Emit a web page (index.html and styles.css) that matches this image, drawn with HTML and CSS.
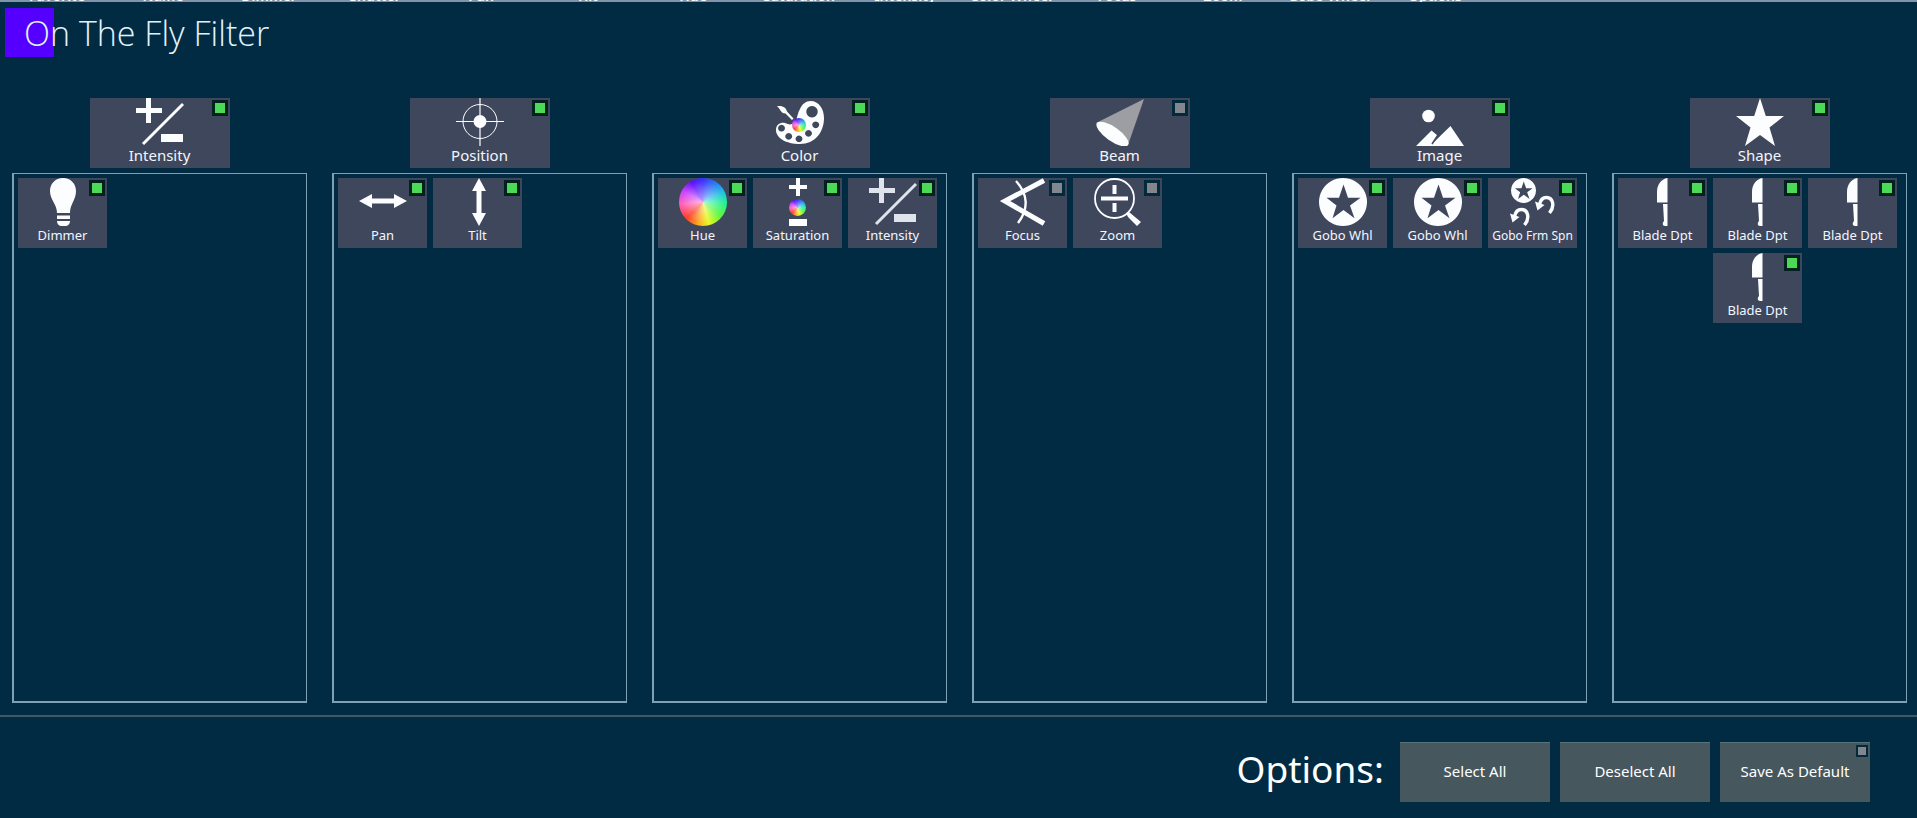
FILE: index.html
```html
<!DOCTYPE html>
<html lang="en">
<head>
<meta charset="utf-8">
<title>On The Fly Filter</title>
<link rel="stylesheet" href="styles.css">
</head>
<body>
<svg class="defs" aria-hidden="true">
  <symbol id="plus-minus" viewBox="0 0 48 48"><path d="M10 0h5v10h11v5H15v10h-5V15H0v-5h10zM25 36h22v8H25z"/><path d="M7 46 47 6" stroke="currentColor" stroke-width="3"/></symbol>
  <symbol id="bulb" viewBox="0 0 48 48"><path d="M24 0c8 0 13 6 13 13 0 9-6 13-6 22H18c0-9-7-13-7-22C11 6 16 0 24 0zM18 37.500h13v3.500H18zM18 43h13c0 3-2 5-5 5h-3c-3 0-5-2-5-5z"/></symbol>
  <symbol id="target" viewBox="0 0 48 48"><path d="M24 0v48M0 23.500h48" stroke="currentColor" stroke-width="1.200"/><circle cx="24" cy="23.500" r="17" fill="none" stroke="currentColor"/><circle cx="24" cy="23.500" r="6.500"/></symbol>
  <symbol id="arrows" viewBox="0 0 48 48"><path d="M0 23 13 16v4.500h22V16l13 7-13 7v-4.500H13V30z"/></symbol>
  <symbol id="palette" viewBox="0 0 48 48"><path fill-rule="evenodd" d="M34.500 3C43 3 48 11 48 20c0 14-9 26-24 26C10 46 0 40 0 32c0-6 5-8 9-7 3 .8 4 2 7 1 6-2 4-8 8-15 2-5 6-8 10.500-8zM36 8a5.700 5.700 0 1 0 .01 0zM39.700 23.400a3.400 3.400 0 1 0 .01 0zM32.500 32a3.400 3.400 0 1 0 .01 0zM23 37.500a3.400 3.400 0 1 0 .01 0zM12.700 35a3.400 3.400 0 1 0 .01 0zM5.500 26.800a3.400 3.400 0 1 0 .01 0z"/><path d="M1 8c5-.5 9 1 10 5.500l6.500 7-1.500 1.500-6.500-6.500C5 15.500 5 12 1 8z"/></symbol>
  <symbol id="cone" viewBox="0 0 48 48"><path d="M48 1 32 47 0 25z" fill="#9c9ea3"/><ellipse cx="16.500" cy="36" rx="19" ry="7" transform="rotate(35 16.500 36)"/></symbol>
  <symbol id="angle" viewBox="0 0 48 48"><path d="M45 2.500 6 23 45 45.500" fill="none" stroke="currentColor" stroke-width="5"/><path d="M17 3c12 13 13 28 2 42" fill="none" stroke="currentColor" stroke-width="2.400"/></symbol>
  <symbol id="zoom" viewBox="0 0 48 48"><circle cx="20.500" cy="20.500" r="19.500" fill="none" stroke="currentColor" stroke-width="1.800"/><path d="M18.500 7h4v9h-4zM7 18.500h27v4H7zM18.500 25h4v9h-4zM32 35l3-1 12 10-4 4-9-9z"/></symbol>
  <symbol id="image" viewBox="0 0 48 48"><circle cx="12.500" cy="18" r="6.300"/><path d="M0 48 15.500 32.500l6 5L16 46l18.500-18L48 48z"/><path d="m22 37-6 9" stroke="#3f475c" stroke-width="1.500"/></symbol>
  <symbol id="star" viewBox="0 0 48 48"><path d="M24 0 29.800 18H48L33.500 29.500 39 48 24 37 9 48l5.500-18.500L0 18h18.200z"/></symbol>
  <symbol id="gobo" viewBox="0 0 48 48"><path fill-rule="evenodd" d="M24 0a24 24 0 1 0 .01 0zM24.500 6.500l4.500 13.200h12.500L31 27.500l4.500 12.800L24.500 32l-11 8.300L17.500 27.500 7.500 19.700H20z"/></symbol>
  <symbol id="spin-arrow" viewBox="0 0 20 20"><path d="M4.500 9.500C5.500 4.500 8.500 2.500 11.500 2.500c6 0 9 8 3 15.500" fill="none" stroke="currentColor" stroke-width="3.400"/><path d="M0 6.500 9.500 10 2.500 15.500z"/></symbol>
  <symbol id="gobo-spin" viewBox="0 0 48 48"><use href="#gobo" x="2" width="25" height="25"/><use href="#spin-arrow" x="26" y="17" width="20" height="20"/><use href="#spin-arrow" x="1" y="29" width="20" height="20"/></symbol>
  <symbol id="blade" viewBox="0 0 48 48"><path d="M28.500 0v24.500H18V14C18 7 22 1 28.500 0zM24 26h4.500v22H26c-2.500 0-3-3-1-5z"/></symbol>
</svg>

<div class="strip" aria-hidden="true">
  <span>Favorite</span><span>Name</span><span>Dimmer</span><span>Shutter</span><span>Pan</span><span>Tilt</span><span>Hue</span><span>Saturation</span><span>Intensity</span><span>Color Wheel</span><span>Focus</span><span>Zoom</span><span>Gobo Wheel</span><span>Options</span>
</div>

<header class="header"><h1 class="title">On The Fly Filter</h1></header>

<main class="groups">
  <section class="group">
    <button class="tile group-tile on"><svg class="icon"><use href="#plus-minus"/></svg><span>Intensity</span></button>
    <div class="panel">
      <button class="tile on"><svg class="icon"><use href="#bulb"/></svg><span>Dimmer</span></button>
    </div>
  </section>
  <section class="group">
    <button class="tile group-tile on"><svg class="icon"><use href="#target"/></svg><span>Position</span></button>
    <div class="panel">
      <button class="tile on"><svg class="icon"><use href="#arrows"/></svg><span>Pan</span></button>
      <button class="tile on"><svg class="icon upright"><use href="#arrows"/></svg><span>Tilt</span></button>
    </div>
  </section>
  <section class="group">
    <button class="tile group-tile on"><i class="icon palette"><svg class="icon"><use href="#palette"/></svg><i class="wheel wheel-dot"></i></i><span>Color</span></button>
    <div class="panel">
      <button class="tile on"><i class="icon wheel"></i><span>Hue</span></button>
      <button class="tile on"><i class="icon saturation"><svg class="plus" viewBox="0 0 18 18"><path d="M7 0h4v7h7v4h-7v7H7v-7H0V7h7z"/></svg><i class="wheel wheel-small"></i><i class="minus"></i></i><span>Saturation</span></button>
      <button class="tile on"><svg class="icon muted"><use href="#plus-minus"/></svg><span>Intensity</span></button>
    </div>
  </section>
  <section class="group">
    <button class="tile group-tile"><svg class="icon"><use href="#cone"/></svg><span>Beam</span></button>
    <div class="panel">
      <button class="tile"><svg class="icon"><use href="#angle"/></svg><span>Focus</span></button>
      <button class="tile"><svg class="icon"><use href="#zoom"/></svg><span>Zoom</span></button>
    </div>
  </section>
  <section class="group">
    <button class="tile group-tile on"><svg class="icon"><use href="#image"/></svg><span>Image</span></button>
    <div class="panel">
      <button class="tile on"><svg class="icon"><use href="#gobo"/></svg><span>Gobo Whl</span></button>
      <button class="tile on"><svg class="icon"><use href="#gobo"/></svg><span>Gobo Whl</span></button>
      <button class="tile on long"><svg class="icon"><use href="#gobo-spin"/></svg><span>Gobo Frm Spn</span></button>
    </div>
  </section>
  <section class="group">
    <button class="tile group-tile on"><svg class="icon"><use href="#star"/></svg><span>Shape</span></button>
    <div class="panel">
      <button class="tile on"><svg class="icon"><use href="#blade"/></svg><span>Blade Dpt</span></button>
      <button class="tile on"><svg class="icon"><use href="#blade"/></svg><span>Blade Dpt</span></button>
      <button class="tile on"><svg class="icon"><use href="#blade"/></svg><span>Blade Dpt</span></button>
      <button class="tile on"><svg class="icon"><use href="#blade"/></svg><span>Blade Dpt</span></button>
    </div>
  </section>
</main>

<footer class="footer">
  <h2 class="options">Options:</h2>
  <button class="action">Select All</button>
  <button class="action">Deselect All</button>
  <button class="action savable">Save As Default</button>
</footer>
</body>
</html>
```
FILE: styles.css
```css
*, *::before, *::after { box-sizing: border-box; }

body {
  margin: 0;
  min-height: 100vh;
  display: flex;
  flex-direction: column;
  background: #002b42;
  color: #f2f6ff;
  font-family: "Noto Sans", "Open Sans", sans-serif;
}

button {
  border: 0;
  padding: 0;
  color: inherit;
  font: inherit;
}

.defs { position: absolute; width: 0; height: 0; }

/* bottom edge of the column headings behind the window */
.strip {
  height: 2px;
  overflow: hidden;
  display: flex;
  align-items: flex-end;
  padding-left: 4px;
  background: #8494a8;
  color: #fff;
  font-size: 14px;
  font-weight: 600;
  line-height: 12px;
}
.strip span { flex: 0 0 106px; text-align: center; }

.header { height: 96px; padding: 0 24px; }
.title {
  position: relative;
  z-index: 0;
  margin: 0;
  font-family: "Open Sans", "Noto Sans", sans-serif;
  font-weight: 300;
  font-size: 34px;
  line-height: 62px;
  color: #e2f2fa;
}
.title::before {
  content: "";
  position: absolute;
  z-index: -1;
  left: -19px;
  top: 6px;
  width: 49px;
  height: 49px;
  background: #5500ff;
}

.groups {
  flex: 1;
  display: grid;
  grid-template-columns: repeat(6, 1fr);
  gap: 25px;
  padding: 0 10px 12px 12px;
}
.group {
  display: flex;
  flex-direction: column;
  align-items: center;
  gap: 5px;
}
.panel {
  flex: 1;
  align-self: stretch;
  display: grid;
  grid-template-columns: repeat(auto-fill, 89px);
  align-content: start;
  gap: 5px 6px;
  padding: 4px;
  border: solid #7f9fb4;
  border-width: 1px 1px 2px 2px;
}

.tile {
  position: relative;
  height: 70px;
  display: flex;
  flex-direction: column;
  align-items: center;
  background: #3f475c;
  font-size: 13px;
  line-height: 19px;
  white-space: nowrap;
}
.tile:nth-child(4) { grid-column: 2; }
.group-tile { width: 140px; font-size: 15px; line-height: 18px; }
.long { font-size: 12px; }

/* state lamp */
.tile::after,
.savable::after {
  content: "";
  position: absolute;
  top: 2px;
  right: 2px;
  width: 16px;
  height: 16px;
  border: 3px solid #012a3c;
  background: #83868c;
}
.tile.on::after { background: #4cd955; border-color: #03211e; }

.icon {
  display: block;
  flex: none;
  width: 48px;
  height: 48px;
  fill: currentColor;
  color: #fcfdff;
}
.upright { transform: rotate(90deg); }
.muted { color: #dfe3ec; }

.wheel {
  border-radius: 50%;
  background:
    radial-gradient(circle, #fff9 0, #fff0 65%),
    conic-gradient(#3a30ff, #20b8e8 60deg, #20f09c 90deg, #60f838 130deg, #e8f820 165deg, #ffa020 195deg, #ff4028 225deg, #ff60c0 265deg, #c840ff 300deg, #6010ff 330deg, #3a30ff);
}
.palette { position: relative; }
.wheel-dot {
  position: absolute;
  left: 16px;
  top: 20px;
  width: 14px;
  height: 14px;
}
.saturation {
  display: flex;
  flex-direction: column;
  align-items: center;
  gap: 3px;
}
.plus { width: 18px; height: 18px; }
.wheel-small { width: 17px; height: 17px; }
.minus { width: 18px; height: 7px; background: #fff; }

.footer {
  display: flex;
  justify-content: flex-end;
  align-items: flex-start;
  gap: 10px;
  padding: 25px 47px 16px;
  border-top: 2px solid #3f5866;
}
.options {
  margin: 0 6px 0 0;
  font-weight: 400;
  font-size: 37px;
  line-height: 54px;
  color: #fff;
}
.action {
  position: relative;
  width: 150px;
  height: 60px;
  padding-bottom: 4px;
  background: #46575d;
  border-top: 1px solid #55747b;
  font-size: 15px;
  color: #fff;
}
.savable::after {
  width: 12px;
  height: 12px;
  border-width: 2px;
}
```
